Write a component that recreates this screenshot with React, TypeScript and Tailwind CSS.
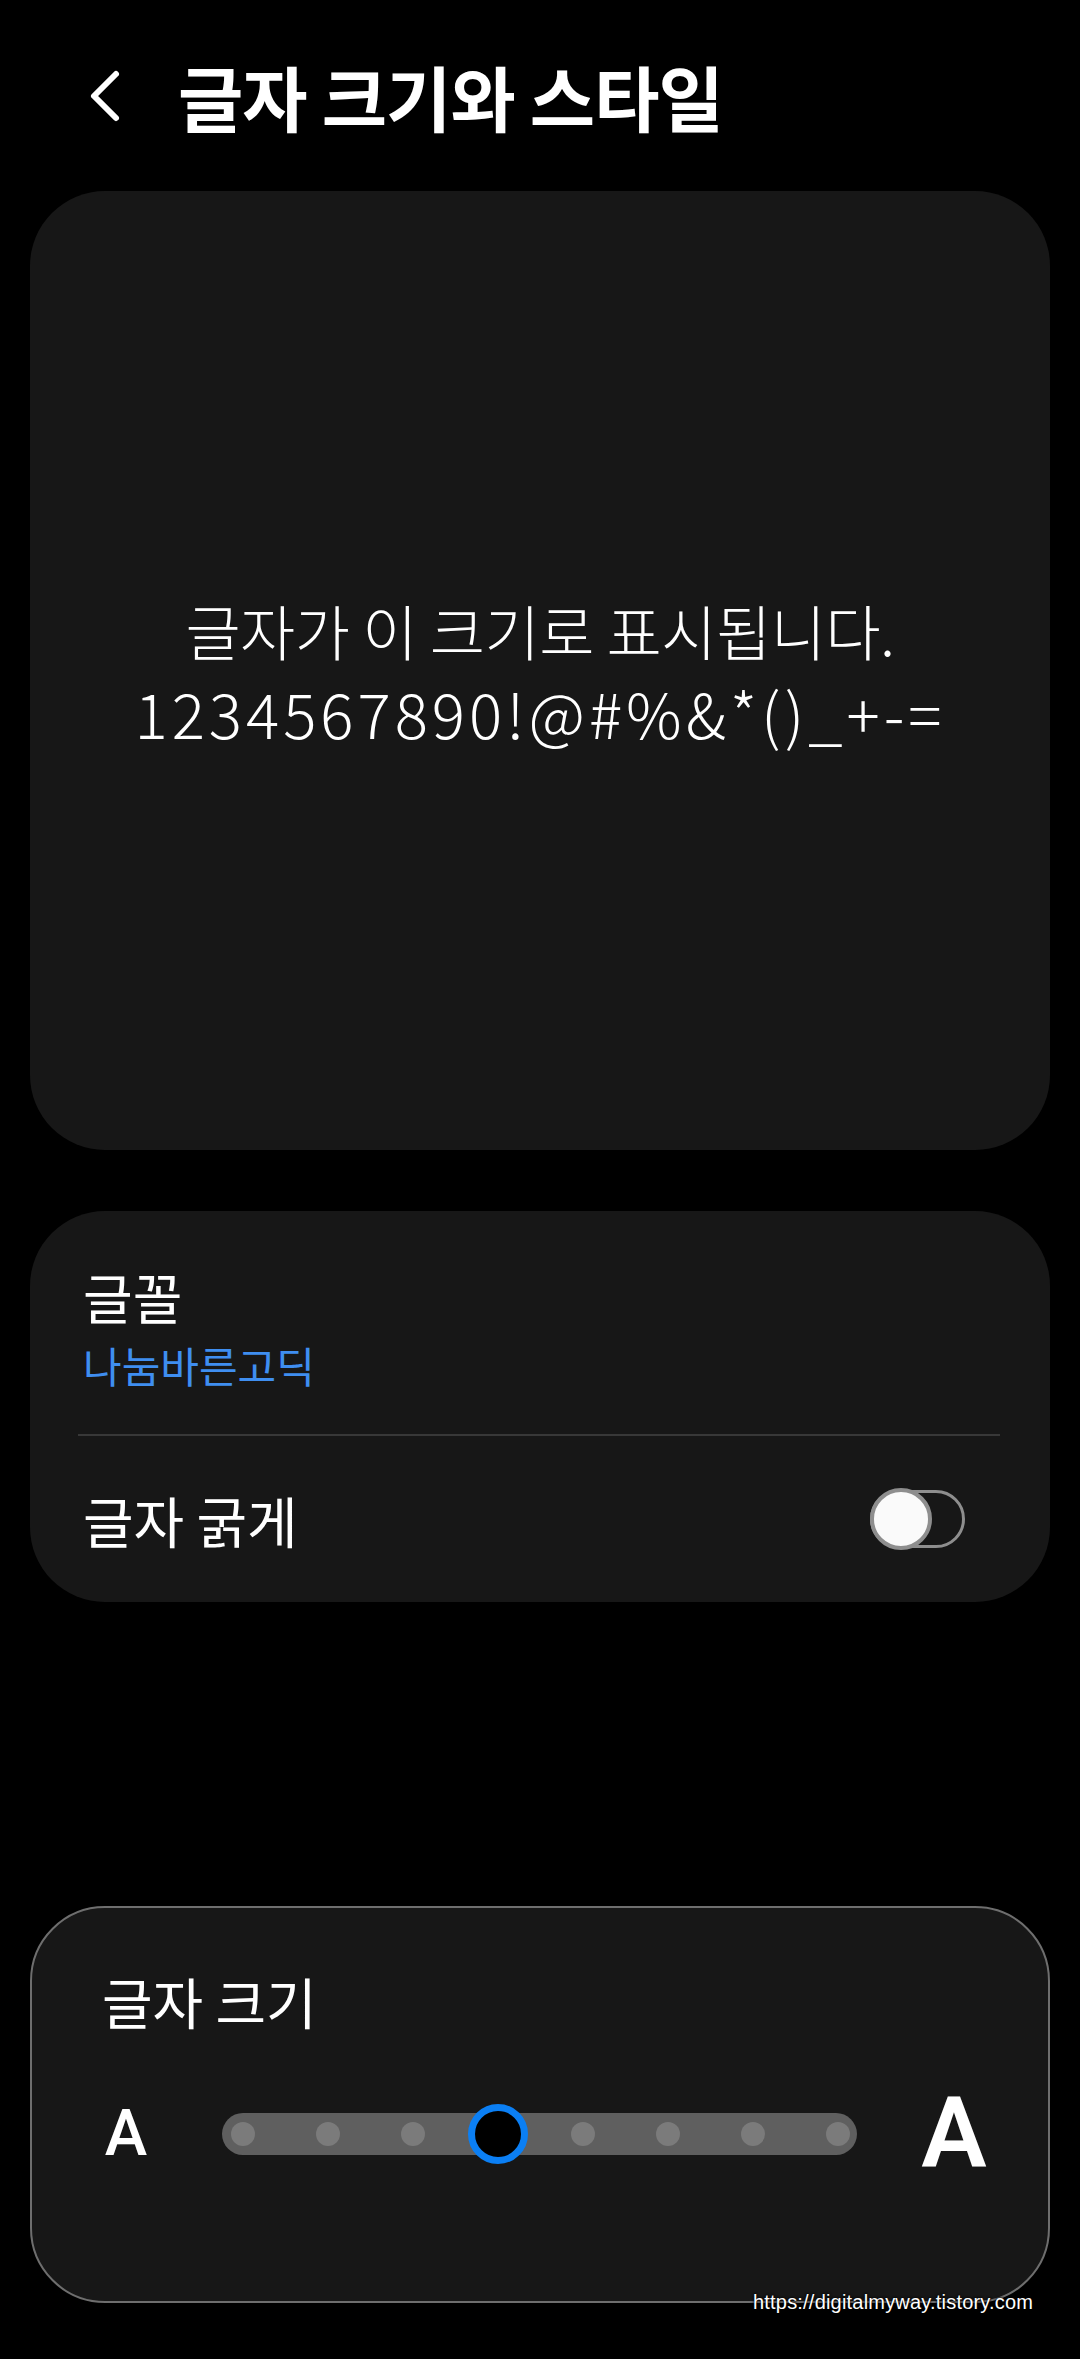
import React from 'react'

const kr = { fontFamily: '"Noto Sans CJK KR", "Noto Sans", sans-serif' }

function BackIcon() {
  return (
    <svg width="38" height="56" viewBox="0 0 38 56" fill="none">
      <path d="M30 6 L8 28 L30 50" stroke="#ffffff" strokeWidth="6" strokeLinecap="round" strokeLinejoin="round" />
    </svg>
  )
}

function Toggle() {
  return (
    <div className="relative flex h-[62px] w-[95px] items-center">
      <div className="h-[58px] w-full rounded-full border-[3px] border-[#8e8e8e]" />
      <div className="absolute left-0 top-0 h-[62px] w-[62px] rounded-full border-[4px] border-[#8e8e8e] bg-[#fafafa]" />
    </div>
  )
}

function SizeSlider() {
  const steps = [0, 1, 2, 3, 4, 5, 6, 7]
  const current = 3
  return (
    <div className="flex h-[42px] w-[635px] items-center rounded-full bg-[#5f5f5f]">
      <div className="-mx-[22px] flex w-[680px] shrink-0">
        {steps.map((s) => (
          <div key={s} className="flex h-[42px] w-[85px] items-center justify-center">
            {s === current ? (
              <div className="h-[60px] w-[60px] rounded-full border-[7px] border-[#0b7ff4] bg-black" />
            ) : (
              <div className="h-[24px] w-[24px] rounded-full bg-[#7b7b7b]" />
            )}
          </div>
        ))}
      </div>
    </div>
  )
}

export default function App() {
  return (
    <div className="relative min-h-[2359px] w-[1080px] bg-black text-white" style={kr}>
      {/* header */}
      <div className="flex h-[191px] items-center pl-[86px]">
        <BackIcon />
        <h1 className="ml-[54px] text-[71px] font-bold leading-none tracking-[-1px]">글자 크기와 스타일</h1>
      </div>

      {/* preview */}
      <div className="mx-[30px] flex h-[959px] flex-col items-center justify-center rounded-[75px] bg-[#171717] text-center">
        <p className="text-[60px] font-light leading-[82px] tracking-[-0.5px]">글자가 이 크기로 표시됩니다.</p>
        <p className="text-[62px] font-light leading-[82px] tracking-[4px]">1234567890!@#%&amp;*()_+-=</p>
      </div>

      {/* font options */}
      <div className="mx-[30px] mt-[61px] h-[391px] rounded-[75px] bg-[#171717]">
        <div className="pl-[53px] pt-[56px]">
          <div className="text-[54px] leading-[60px]">글꼴</div>
          <div className="mt-[14px] text-[42px] leading-[48px] text-[#3f8ef0]">나눔바른고딕</div>
        </div>
        <div className="ml-[48px] mr-[50px] mt-[45px] h-[2px] bg-[#383838]" />
        <div className="flex h-[166px] items-center justify-between pl-[53px] pr-[85px]">
          <div className="text-[55px] leading-[60px]">글자 굵게</div>
          <Toggle />
        </div>
      </div>

      {/* size */}
      <div className="mx-[30px] mt-[304px] h-[397px] rounded-[75px] border-2 border-[#6e6e6e] bg-[#171717]">
        <div className="pl-[70px] pt-[62px] text-[55px] leading-[60px]">글자 크기</div>
        <div className="mt-[54px] flex h-[100px] items-center">
          <div className="ml-[58px] w-[72px] text-center text-[64px] font-medium leading-none" style={{ fontFamily: 'Roboto, "Noto Sans", sans-serif' }}>A</div>
          <div className="ml-[60px]">
            <SizeSlider />
          </div>
          <div className="ml-[57px] w-[80px] text-center text-[98px] font-semibold leading-none" style={{ fontFamily: 'Roboto, "Noto Sans", sans-serif' }}>A</div>
        </div>
      </div>

      <div
        className="absolute left-[753px] top-[2290px] text-[20px] leading-[24px] tracking-[0.2px] text-white [text-shadow:0_0_3px_#000,0_0_2px_#000]"
        style={{ fontFamily: '"Liberation Sans", Arial, sans-serif' }}
      >
        https://digitalmyway.tistory.com
      </div>
    </div>
  )
}
